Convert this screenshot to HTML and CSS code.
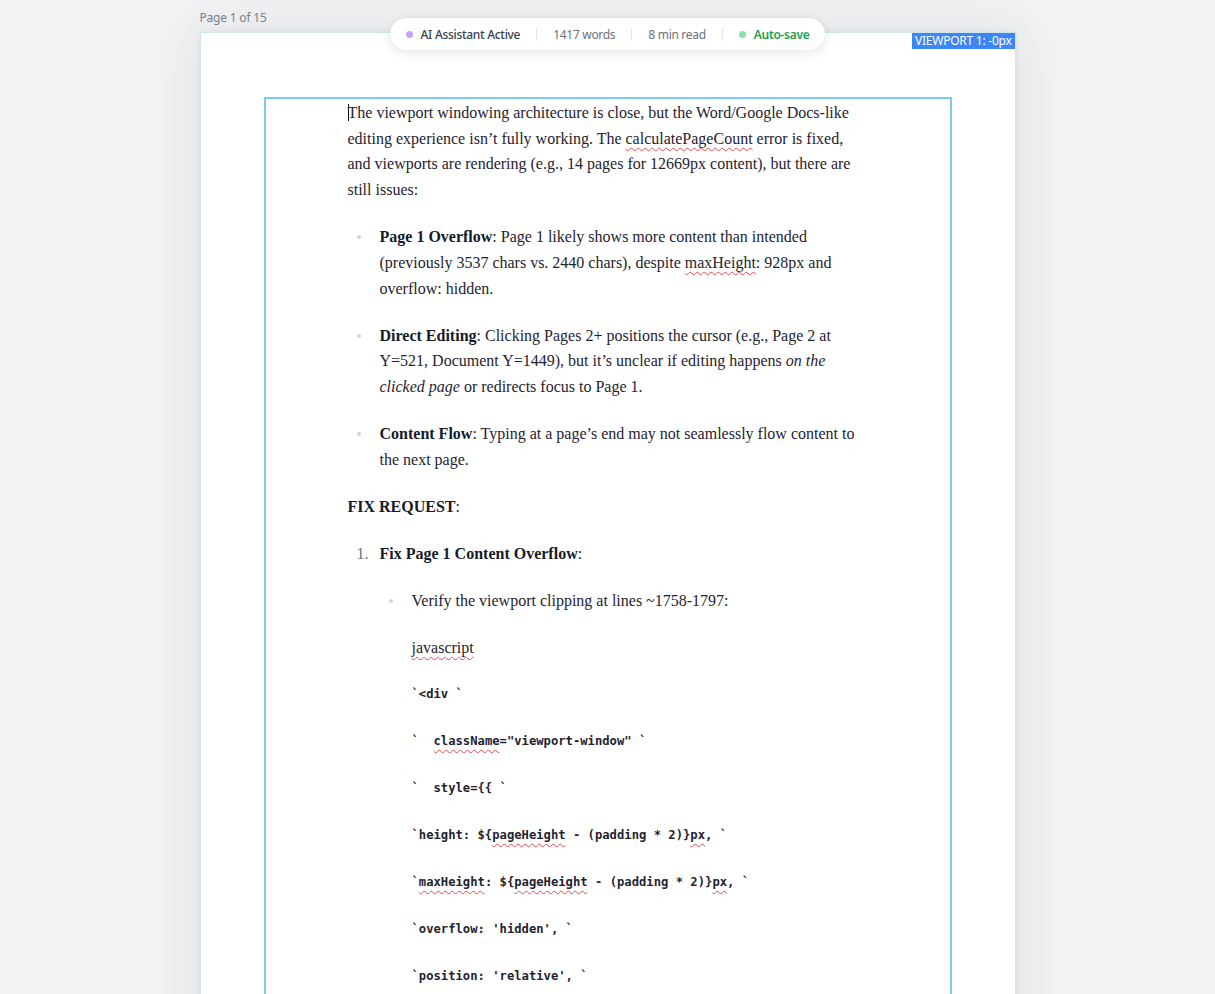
FILE: index.html
```html
<!DOCTYPE html>
<html lang="en">
<head>
<meta charset="utf-8">
<title>Document Editor</title>
<link rel="stylesheet" href="styles.css">
</head>
<body>
<div class="canvas">
  <div class="sheet">
    <div class="page-label">Page 1 of 15</div>
    <div class="page">
      <div class="status-pill">
        <span class="status-item strong"><span class="dot dot-purple"></span>AI Assistant Active</span>
        <span class="sep"></span>
        <span class="status-item">1417 words</span>
        <span class="sep"></span>
        <span class="status-item">8 min read</span>
        <span class="sep"></span>
        <span class="status-item save"><span class="dot dot-green"></span>Auto-save</span>
      </div>
      <div class="viewport-tag">VIEWPORT 1: -0px</div>
      <div class="viewport-window">
        <div class="doc">
          <p><span class="caret"></span>The viewport windowing architecture is close, but the Word/Google Docs-like editing experience isn’t fully working. The <span class="sp">calculatePageCount</span> error is fixed, and viewports are rendering (e.g., 14 pages for 12669px content), but there are still issues:</p>
          <ul class="bullets">
            <li><p><strong>Page 1 Overflow</strong>: Page 1 likely shows more content than intended (previously 3537 chars vs. 2440 chars), despite <span class="sp">maxHeight</span>: 928px and overflow: hidden.</p></li>
            <li><p><strong>Direct Editing</strong>: Clicking Pages 2+ positions the cursor (e.g., Page 2 at Y=521, Document Y=1449), but it’s unclear if editing happens <em>on the clicked page</em> or redirects focus to Page 1.</p></li>
            <li><p><strong>Content Flow</strong>: Typing at a page’s end may not seamlessly flow content to the next page.</p></li>
          </ul>
          <p><strong>FIX REQUEST</strong>:</p>
          <ol class="steps">
            <li>
              <p><strong>Fix Page 1 Content Overflow</strong>:</p>
              <ul class="bullets">
                <li>
                  <p>Verify the viewport clipping at lines ~1758-1797:</p>
                  <p><span class="sp">javascript</span></p>
                  <p class="code">`&lt;div `</p>
                  <p class="code">`  <span class="sp">className</span>="viewport-window" `</p>
                  <p class="code">`  style={{ `</p>
                  <p class="code">`height: ${<span class="sp">pageHeight</span> - (padding * 2)}<span class="sp">px</span>, `</p>
                  <p class="code">`<span class="sp">maxHeight</span>: ${<span class="sp">pageHeight</span> - (padding * 2)}<span class="sp">px</span>, `</p>
                  <p class="code">`overflow: 'hidden', `</p>
                  <p class="code">`position: 'relative', `</p>
                </li>
              </ul>
            </li>
          </ol>
        </div>
      </div>
    </div>
  </div>
</div>
</body>
</html>
```

FILE: styles.css
```css
html, body {
  margin: 0;
  padding: 0;
  background: #f1f2f4;
}

body {
  font-family: "Noto Sans", "DejaVu Sans", sans-serif;
  overflow: hidden;
  height: 994px;
}

.canvas {
  display: flex;
  justify-content: center;
  padding-top: 10px;
}

.sheet {
  width: 816px;
  display: flex;
  flex-direction: column;
}

.page-label {
  font-size: 12px;
  line-height: 16px;
  color: #7d838c;
  margin-bottom: 6px;
  letter-spacing: -0.2px;
}

.page {
  position: relative;
  background: #ffffff;
  border: 1px solid #cfe5ee;
  min-height: 1056px;
  box-shadow: 0 0 48px rgba(30, 41, 59, 0.09), 0 0 6px rgba(30, 41, 59, 0.05);
  padding: 64px 63px 0 63px;
}

/* status pill overlay */
.status-pill {
  position: absolute;
  top: -15px;
  left: 50%;
  transform: translateX(-50%);
  height: 32px;
  box-sizing: border-box;
  display: flex;
  align-items: center;
  gap: 16px;
  padding: 0 16px 0 16px;
  background: #ffffff;
  border-radius: 16px;
  box-shadow: 0 3px 12px rgba(15, 23, 42, 0.10), 0 0 1px rgba(15, 23, 42, 0.12);
  font-size: 12px;
  white-space: nowrap;
  z-index: 2;
}

.status-item {
  display: flex;
  align-items: center;
  gap: 8px;
  color: #6b7280;
  letter-spacing: -0.3px;
}

.status-item.strong {
  color: #374151;
  font-weight: 500;
}

.status-item.save {
  color: #16a34a;
  font-weight: 600;
}

.dot {
  width: 7px;
  height: 7px;
  border-radius: 50%;
  display: inline-block;
}

.dot-purple { background: #c9a2f6; }
.dot-green { background: #86e1a8; }

.sep {
  width: 1px;
  height: 13px;
  background: #e3e5e8;
}

.viewport-tag {
  position: absolute;
  top: 0;
  right: 0;
  background: #3d86f6;
  color: #ffffff;
  font-size: 12px;
  line-height: 16px;
  padding: 0 3px;
  letter-spacing: -0.25px;
  z-index: 1;
}

/* viewport window */
.viewport-window {
  border: 2px solid #7ec8f8;
  min-height: 928px;
  padding: 1px 0 0 82px;
}

.doc {
  width: 516px;
  font-family: "Liberation Serif", "Times New Roman", serif;
  font-size: 16px;
  line-height: 25.7px;
  color: #1f2330;
}

.doc p {
  margin: 0 0 21.3px 0;
}

.doc strong {
  color: #161b2b;
  font-weight: 700;
}

.caret {
  display: inline-block;
  width: 1px;
  height: 17px;
  background: #111111;
  vertical-align: -3px;
  margin-right: -1px;
}

.sp {
  text-decoration: underline wavy #e5484d;
  text-decoration-thickness: 1px;
  text-underline-offset: 3px;
  text-decoration-skip-ink: none;
}

.bullets,
.steps {
  margin: 0;
  padding-left: 32px;
  list-style: none;
}

.bullets > li,
.steps > li {
  position: relative;
}

/* list markers sit over the list's left gutter */
.bullets > li::before {
  content: "";
  position: absolute;
  left: -23px;
  top: 11px;
  width: 4px;
  height: 4px;
  border-radius: 50%;
  background: #d0d4da;
}

.steps {
  counter-reset: step;
}

.steps > li {
  counter-increment: step;
}

.steps > li::before {
  content: counter(step) ".";
  position: absolute;
  left: -23px;
  top: 0;
  color: #6b7280;
}

.code {
  font-family: "DejaVu Sans Mono", "Liberation Mono", monospace;
  font-size: 12.2px;
  font-weight: 700;
  white-space: pre;
  color: #1f2330;
}

.code .sp {
  text-underline-offset: 4px;
}
```
